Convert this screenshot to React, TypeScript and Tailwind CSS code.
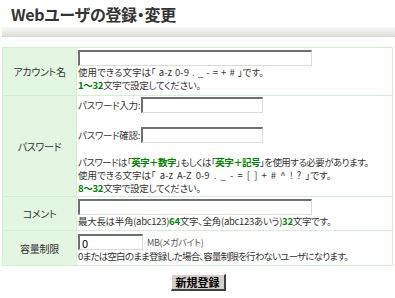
const font = { fontFamily: '"Noto Sans CJK JP", "Liberation Sans", sans-serif', fontFeatureSettings: '"palt"' };

function TextInput({ w, value }: { w: string; value?: string }) {
  return (
    <input
      type="text"
      defaultValue={value}
      className={`${w} h-[16px] shrink-0 bg-white border-t-2 border-l-2 border-b border-r border-t-[#6f6f6f] border-l-[#6f6f6f] border-b-[#dcdcd4] border-r-[#dcdcd4] px-[2px] text-[11px] leading-[12px] text-black outline-none`}
    />
  );
}

function G({ children }: { children: React.ReactNode }) {
  return <span className="font-bold text-[#008000]">{children}</span>;
}

function Label({ children }: { children: React.ReactNode }) {
  return (
    <td className="w-[74px] border border-[#d2efd2] bg-[#e2f6e2] text-center align-middle text-[10px] text-[#333]">
      {children}
    </td>
  );
}

export default function App() {
  return (
    <div className="w-[395px] h-[298px] bg-white text-[#333]" style={font}>
      <h1 className="pl-[11px] pt-[4px] h-[27px] text-[16px] leading-[20px] font-bold tracking-[-0.3px] text-[#333]">
        Webユーザの登録・変更
      </h1>
      <div className="ml-[2px] h-[10px] bg-gradient-to-b from-[#f8f8f4] to-[#e0e0dd] border-b border-[#d8d8d8]" />

      <table className="mt-[10px] ml-[2px] w-[391px] border-collapse text-[9.5px] leading-[13px] tracking-[-0.3px] whitespace-nowrap">
        <tbody>
          <tr>
            <Label>アカウント名</Label>
            <td className="border border-[#d2efd2] pl-[1px] pt-[2px] pb-[3px] align-top">
              <div className="h-[16px]">
                <TextInput w="w-[234px]" />
              </div>
              <div className="h-[13px] tracking-normal [word-spacing:1px]">
                使用できる文字は「 a-z 0-9 . _ - = { } + # 」です。
              </div>
              <div className="h-[13px]">
                <G>1～32</G>文字で設定してください。
              </div>
            </td>
          </tr>
          <tr>
            <Label>パスワード</Label>
            <td className="border border-[#d2efd2] pl-[1px] pt-[1px] pb-[1px] align-top">
              <div className="h-[16px] flex items-center">
                <span className="pr-[1px]">パスワード入力:</span>
                <TextInput w="w-[122px]" />
              </div>
              <div className="h-[14px]" />
              <div className="h-[16px] flex items-center">
                <span className="pr-[1px]">パスワード確認:</span>
                <TextInput w="w-[122px]" />
              </div>
              <div className="h-[13px]" />
              <div className="h-[13px] tracking-[-0.55px]">
                パスワードは「<G>英字＋数字</G>」もしくは「<G>英字＋記号</G>」を使用する必要があります。
              </div>
              <div className="h-[13px] tracking-normal [word-spacing:2px]">
                使用できる文字は「 a-z A-Z 0-9 . _ - = [ ] { } + # ^ ! ? 」です。
              </div>
              <div className="h-[13px]">
                <G>8～32</G>文字で設定してください。
              </div>
            </td>
          </tr>
          <tr>
            <Label>コメント</Label>
            <td className="border border-[#d2efd2] pl-[1px] pt-[2px] pb-[2px] align-top">
              <div className="h-[16px]">
                <TextInput w="w-[234px]" />
              </div>
              <div className="h-[13px]">
                最大長は半角(abc123)<G>64</G>文字、全角(abc123あいう)<G>32</G>文字です。
              </div>
            </td>
          </tr>
          <tr>
            <Label>容量制限</Label>
            <td className="border border-[#d2efd2] pl-[1px] pt-[3px] pb-[2px] align-top">
              <div className="h-[16px] flex items-start gap-[4px]">
                <TextInput w="w-[65px]" value="0" />
                <span className="pt-[3px] text-[9px] leading-[11px] text-[#555]">MB(メガバイト)</span>
              </div>
              <div className="h-[13px] tracking-[-0.8px]">
                0または空白のまま登録した場合、容量制限を行わないユーザになります。
              </div>
            </td>
          </tr>
        </tbody>
      </table>

      <div className="flex justify-center pt-[8px] pl-[1px]">
        <button
          type="button"
          className="h-[17px] w-[55px] bg-[#d4d0c8] border-t border-l border-b-2 border-r-2 border-t-white border-l-white border-b-[#404040] border-r-[#404040] text-[11px] leading-[13px] font-bold text-black"
        >
          新規登録
        </button>
      </div>
    </div>
  );
}
